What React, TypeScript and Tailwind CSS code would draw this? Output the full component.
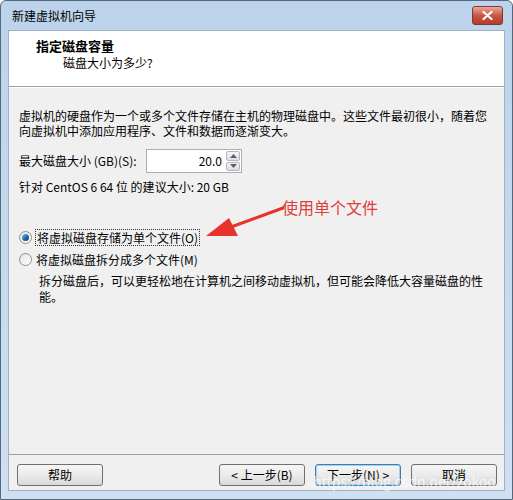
import React from "react";

const FONT = "'Segoe UI', 'Noto Sans CJK SC', 'Noto Sans', sans-serif";

function WinButton({
  label,
  focused = false,
}: {
  label: string;
  focused?: boolean;
}) {
  return (
    <button
      className={
        "flex h-[22px] w-[86px] items-center justify-center rounded-[3px] border bg-gradient-to-b from-[#f6f6f6] via-[#ebebeb] to-[#d9d9d9] text-[12px] text-black " +
        (focused
          ? "border-[#3c7fb1] shadow-[0_0_0_1px_#9fd3f2_inset]"
          : "border-[#707070]")
      }
    >
      {label}
    </button>
  );
}

function Radio({ checked }: { checked: boolean }) {
  return (
    <span className="flex h-[13px] w-[13px] items-center justify-center rounded-full border border-[#8f8f8f] bg-gradient-to-br from-[#e4e4e4] to-[#ffffff]">
      {checked && (
        <span className="h-[7px] w-[7px] rounded-full bg-gradient-to-br from-[#7fc3ee] via-[#1f6fb3] to-[#0d3f75]" />
      )}
    </span>
  );
}

export default function App() {
  return (
    <div
      className="relative flex h-[500px] w-[513px] flex-col overflow-hidden rounded-t-[6px] border border-[#56687c] bg-gradient-to-b from-[#bcd3eb] to-[#cfe0f2]"
      style={{ fontFamily: FONT }}
    >
      {/* Title bar */}
      <div className="flex h-[29px] shrink-0 items-center justify-between pl-[11px] pr-[9px]">
        <span className="text-[12px] text-black">新建虚拟机向导</span>
        <div className="flex h-[19px] w-[31px] items-center justify-center rounded-[3px] border border-[#7a3a34] bg-gradient-to-b from-[#e9a99c] via-[#c75647] to-[#b8392b]">
          <svg width="11" height="9" viewBox="0 0 11 9">
            <path
              d="M1.5 1 L9.5 8 M9.5 1 L1.5 8"
              stroke="#fff"
              strokeWidth="2.2"
              strokeLinecap="round"
            />
          </svg>
        </div>
      </div>

      {/* Client area */}
      <div className="mx-[7px] flex flex-1 flex-col border border-[#9db1c8] bg-[#f0f0f0]">
        {/* Header */}
        <div className="flex h-[56px] flex-col border-b border-[#a0a0a0] bg-white pl-[27px] pt-[6px]">
          <span className="text-[13px] font-bold leading-[17px] text-black">
            指定磁盘容量
          </span>
          <span className="pl-[27px] text-[12px] leading-[18px] text-black">
            磁盘大小为多少?
          </span>
        </div>

        {/* Body */}
        <div className="relative flex flex-1 flex-col border-t border-white pl-[10px] pt-[20px] text-[12px] text-black">
          <p className="w-[472px] text-[12px] leading-[15px]">
            虚拟机的硬盘作为一个或多个文件存储在主机的物理磁盘中。这些文件最初很小，随着您向虚拟机中添加应用程序、文件和数据而逐渐变大。
          </p>

          <div className="mt-[11px] flex items-center">
            <span className="w-[127px] leading-[16px]">最大磁盘大小 (GB)(S):</span>
            <div className="flex h-[24px] items-stretch border border-[#abadb3] bg-white">
              <span className="flex w-[78px] items-center justify-end pr-[3px] text-[12px]">
                20.0
              </span>
              <div className="flex w-[16px] flex-col gap-[1px] p-[1px]">
                <span className="flex flex-1 items-center justify-center rounded-[2px] border border-[#b5b5b5] bg-gradient-to-b from-[#f5f5f5] to-[#dedede]">
                  <svg width="7" height="4" viewBox="0 0 7 4">
                    <path d="M0 4 L3.5 0 L7 4 Z" fill="#4d6185" />
                  </svg>
                </span>
                <span className="flex flex-1 items-center justify-center rounded-[2px] border border-[#b5b5b5] bg-gradient-to-b from-[#f5f5f5] to-[#dedede]">
                  <svg width="7" height="4" viewBox="0 0 7 4">
                    <path d="M0 0 L7 0 L3.5 4 Z" fill="#4d6185" />
                  </svg>
                </span>
              </div>
            </div>
          </div>

          <p className="mt-[6px] leading-[16px]">针对 CentOS 6 64 位 的建议大小: 20 GB</p>

          {/* Annotation */}
          <span className="absolute left-[273px] top-[109px] text-[16px] leading-[20px] text-[#e0403a]">
            使用单个文件
          </span>
          <svg
            className="absolute left-[192px] top-[117px]"
            width="90"
            height="40"
            viewBox="0 0 90 40"
          >
            <path d="M82 3 L30 22" stroke="#e8322c" strokeWidth="3" strokeLinecap="round" />
            <path d="M5 31 L28 13 L37 31 Z" fill="#e8322c" />
          </svg>

          <div className="mt-[34px] flex items-center gap-[3px]">
            <Radio checked />
            <span className="border border-dotted border-[#333] px-[1px] leading-[15px]">
              将虚拟磁盘存储为单个文件(O)
            </span>
          </div>
          <div className="mt-[6px] flex items-center gap-[4px]">
            <Radio checked={false} />
            <span className="leading-[15px]">将虚拟磁盘拆分成多个文件(M)</span>
          </div>
          <p className="mt-[6px] w-[469px] pl-[20px] leading-[16px]">
            拆分磁盘后，可以更轻松地在计算机之间移动虚拟机，但可能会降低大容量磁盘的性能。
          </p>
        </div>

        {/* Footer */}
        <div className="flex h-[36px] items-start border-t border-[#a0a0a0] pl-[8px] pr-[7px] pt-[9px]">
          <WinButton label="帮助" />
          <div className="ml-auto flex gap-[10px]">
            <WinButton label="< 上一步(B)" />
            <WinButton label="下一步(N) >" focused />
            <WinButton label="取消" />
          </div>
        </div>
      </div>
      <div className="h-[8px] shrink-0" />

      {/* Watermark */}
      <span className="pointer-events-none absolute left-[312px] top-[470px] text-[14px] text-white/70">
        https://blog.csdn.net/zokoo
      </span>
    </div>
  );
}
